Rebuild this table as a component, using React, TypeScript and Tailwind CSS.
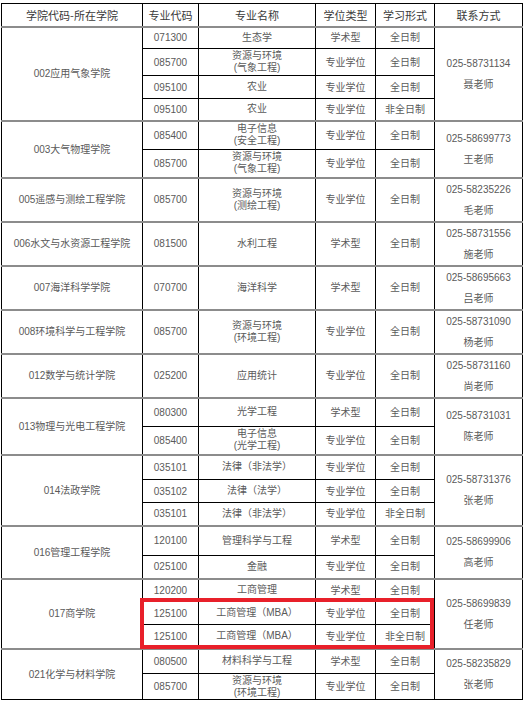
type Row = { code: string; name: string[]; type: string; mode: string; h: number };
type Group = { college: string; phone: string; teacher: string; rows: Row[] };

const groups: Group[] = [
  {
    college: '002应用气象学院', phone: '025-58731134', teacher: '聂老师',
    rows: [
      { code: '071300', name: ['生态学'], type: '学术型', mode: '全日制', h: 22 },
      { code: '085700', name: ['资源与环境', '(气象工程)'], type: '专业学位', mode: '全日制', h: 27 },
      { code: '095100', name: ['农业'], type: '专业学位', mode: '全日制', h: 23 },
      { code: '095100', name: ['农业'], type: '专业学位', mode: '非全日制', h: 22 },
    ],
  },
  {
    college: '003大气物理学院', phone: '025-58699773', teacher: '王老师',
    rows: [
      { code: '085400', name: ['电子信息', '(安全工程)'], type: '专业学位', mode: '全日制', h: 29 },
      { code: '085700', name: ['资源与环境', '(气象工程)'], type: '专业学位', mode: '全日制', h: 28 },
    ],
  },
  {
    college: '005遥感与测绘工程学院', phone: '025-58235226', teacher: '毛老师',
    rows: [{ code: '085700', name: ['资源与环境', '(测绘工程)'], type: '专业学位', mode: '全日制', h: 44 }],
  },
  {
    college: '006水文与水资源工程学院', phone: '025-58731556', teacher: '施老师',
    rows: [{ code: '081500', name: ['水利工程'], type: '学术型', mode: '全日制', h: 44 }],
  },
  {
    college: '007海洋科学学院', phone: '025-58695663', teacher: '吕老师',
    rows: [{ code: '070700', name: ['海洋科学'], type: '学术型', mode: '全日制', h: 44 }],
  },
  {
    college: '008环境科学与工程学院', phone: '025-58731090', teacher: '杨老师',
    rows: [{ code: '085700', name: ['资源与环境', '(环境工程)'], type: '专业学位', mode: '全日制', h: 43 }],
  },
  {
    college: '012数学与统计学院', phone: '025-58731160', teacher: '尚老师',
    rows: [{ code: '025200', name: ['应用统计'], type: '专业学位', mode: '全日制', h: 44 }],
  },
  {
    college: '013物理与光电工程学院', phone: '025-58731031', teacher: '陈老师',
    rows: [
      { code: '080300', name: ['光学工程'], type: '学术型', mode: '全日制', h: 29 },
      { code: '085400', name: ['电子信息', '(光学工程)'], type: '专业学位', mode: '全日制', h: 28 },
    ],
  },
  {
    college: '014法政学院', phone: '025-58731376', teacher: '张老师',
    rows: [
      { code: '035101', name: ['法律（非法学）'], type: '专业学位', mode: '全日制', h: 25 },
      { code: '035102', name: ['法律（法学）'], type: '专业学位', mode: '全日制', h: 23 },
      { code: '035101', name: ['法律（非法学）'], type: '专业学位', mode: '非全日制', h: 23 },
    ],
  },
  {
    college: '016管理工程学院', phone: '025-58699906', teacher: '高老师',
    rows: [
      { code: '120100', name: ['管理科学与工程'], type: '学术型', mode: '全日制', h: 30 },
      { code: '025100', name: ['金融'], type: '专业学位', mode: '全日制', h: 23 },
    ],
  },
  {
    college: '017商学院', phone: '025-58699839', teacher: '任老师',
    rows: [
      { code: '120200', name: ['工商管理'], type: '学术型', mode: '全日制', h: 23 },
      { code: '125100', name: ['工商管理（MBA）'], type: '专业学位', mode: '全日制', h: 23 },
      { code: '125100', name: ['工商管理（MBA）'], type: '专业学位', mode: '非全日制', h: 24 },
    ],
  },
  {
    college: '021化学与材料学院', phone: '025-58235829', teacher: '张老师',
    rows: [
      { code: '080500', name: ['材料科学与工程'], type: '学术型', mode: '全日制', h: 25 },
      { code: '085700', name: ['资源与环境', '(环境工程)'], type: '专业学位', mode: '全日制', h: 26 },
    ],
  },
];

const headers = ['学院代码-所在学院', '专业代码', '专业名称', '学位类型', '学习形式', '联系方式'];

export default function App() {
  return (
    <div className="bg-white w-[524px] h-[703px] pt-[3px] pl-[1px] font-['Liberation_Sans','Noto_Sans_CJK_SC',sans-serif]">
      <div className="relative w-[521px]">
        <table className="w-[521px] table-fixed border-collapse text-center text-[10px] text-[#5a5a5a]">
          <colgroup>
            <col className="w-[141px]" />
            <col className="w-[56px]" />
            <col className="w-[117px]" />
            <col className="w-[60px]" />
            <col className="w-[59px]" />
            <col className="w-[88px]" />
          </colgroup>
          <thead>
            <tr className="h-[23px]">
              {headers.map((h) => (
                <th key={h} className="p-0 h-[23px] border border-black border-b-2 border-b-[#8c8c8c] font-normal text-[11px] text-[#3a3a3a] font-['Noto_Sans_CJK_SC',sans-serif]">
                  {h}
                </th>
              ))}
            </tr>
          </thead>
          <tbody>
            {groups.map((g, gi) => {
              const lastGroup = gi === groups.length - 1;
              const groupEdge = lastGroup ? 'border border-black' : 'border border-black border-b-2 border-b-[#8c8c8c]';
              return g.rows.map((r, i) => {
                const edge = i === g.rows.length - 1 ? groupEdge : 'border border-black';
                return (
                  <tr key={`${gi}-${i}`}>
                    {i === 0 && (
                      <td rowSpan={g.rows.length} className={`p-0 ${groupEdge}`}>
                        {g.college}
                      </td>
                    )}
                    <td className={`p-0 ${edge}`} style={{ height: r.h }}>{r.code}</td>
                    <td className={`p-0 leading-[12px] ${edge}`}>
                      {r.name.map((n) => (
                        <div key={n}>{n}</div>
                      ))}
                    </td>
                    <td className={`p-0 ${edge}`}>{r.type}</td>
                    <td className={`p-0 ${edge}`}>{r.mode}</td>
                    {i === 0 && (
                      <td rowSpan={g.rows.length} className={`p-0 leading-[21px] ${groupEdge}`}>
                        <div>{g.phone}</div>
                        <div>{g.teacher}</div>
                      </td>
                    )}
                  </tr>
                );
              });
            })}
          </tbody>
        </table>
        {/* highlight box */}
        <div className="absolute left-[139px] top-[595px] w-[294px] h-[51px] border-4 border-[#e8202a]" />
      </div>
    </div>
  );
}
